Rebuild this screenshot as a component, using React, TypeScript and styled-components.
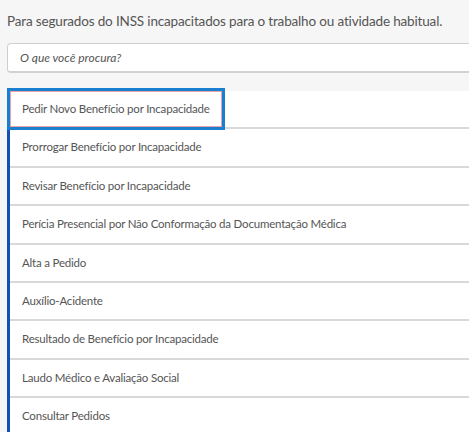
import React from "react";
import styled, { createGlobalStyle } from "styled-components";

const Global = createGlobalStyle`
  html, body {
    margin: 0;
    padding: 0;
    background: #f6f6f6;
    overflow: hidden;
  }
  body {
    font-family: Lato, "Open Sans", "Liberation Sans", sans-serif;
  }
`;

const Page = styled.div`
  width: 520px;
  padding: 11px 0 0 7px;
  display: flex;
  flex-direction: column;
`;

const Intro = styled.p`
  margin: 0;
  font-size: 13.5px;
  line-height: 21px;
  color: #555;
  letter-spacing: -0.16px;
`;

const Search = styled.div`
  margin-top: 11px;
  height: 27px;
  background: #fff;
  border: 1px solid #cfcfcf;
  border-bottom: 2px solid #d2d2d2;
  border-radius: 4px;
  display: flex;
  align-items: center;
  padding-left: 12px;
`;

const Placeholder = styled.span`
  font-size: 12px;
  font-style: italic;
  color: #555;
`;

const List = styled.ul`
  list-style: none;
  margin: 18px 0 0;
  padding: 0;
  border-left: 3px solid #1351b4;
`;

const Row = styled.li`
  background: #fff;
  border-bottom: 2px solid #d9d9d9;
`;

const Link = styled.a<{ $focused?: boolean }>`
  display: ${(p) => (p.$focused ? "inline-block" : "block")};
  padding: 11px 12px;
  font-size: 11.5px;
  line-height: 14.4px;
  letter-spacing: -0.2px;
  color: #555;
  text-decoration: none;
  ${(p) =>
    p.$focused &&
    `
    padding: 10px 11px;
    border: 1px solid #e7a2aa;
    outline: 3px solid #1a7fcf;
  `}
`;

const items = [
  "Pedir Novo Benefício por Incapacidade",
  "Prorrogar Benefício por Incapacidade",
  "Revisar Benefício por Incapacidade",
  "Perícia Presencial por Não Conformação da Documentação Médica",
  "Alta a Pedido",
  "Auxílio-Acidente",
  "Resultado de Benefício por Incapacidade",
  "Laudo Médico e Avaliação Social",
  "Consultar Pedidos",
];

export default function App() {
  return (
    <>
      <Global />
      <Page>
        <Intro>Para segurados do INSS incapacitados para o trabalho ou atividade habitual.</Intro>
        <Search>
          <Placeholder>O que você procura?</Placeholder>
        </Search>
        <List>
          {items.map((t, i) => (
            <Row key={t}>
              <Link href="#" $focused={i === 0}>
                {t}
              </Link>
            </Row>
          ))}
        </List>
      </Page>
    </>
  );
}
